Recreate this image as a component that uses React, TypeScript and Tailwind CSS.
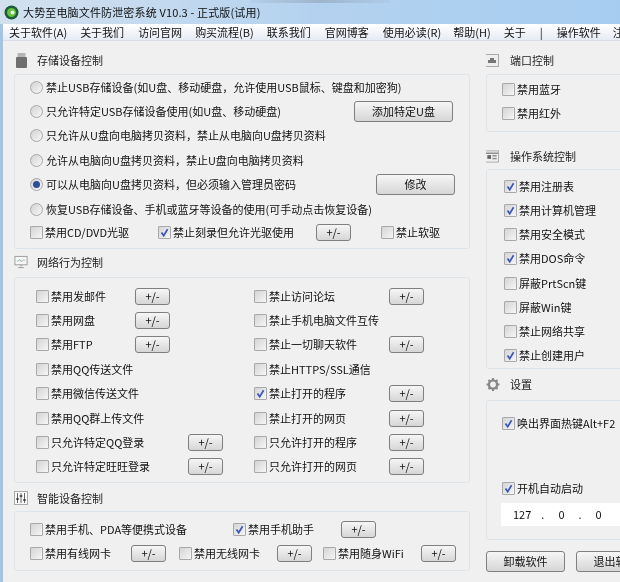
import React from "react";

const FONT = { fontFamily: '"Noto Sans CJK SC", "Liberation Sans", sans-serif' };

function Check({ on = false }: { on?: boolean }) {
  return (
    <span className="w-[13px] h-[13px] shrink-0 flex items-center justify-center border border-[#a9a9a9] bg-gradient-to-br from-[#d4d4d4] to-[#f6f6f6] rounded-[1px]">
      {on && (
        <svg width="11" height="11" viewBox="0 0 11 11">
          <path d="M2.5 5.5 L4.7 8.6 L8.6 2.2" fill="none" stroke="#3a56b8" strokeWidth="1.7" />
        </svg>
      )}
    </span>
  );
}

function Radio({ on = false }: { on?: boolean }) {
  return (
    <span className="w-[13px] h-[13px] shrink-0 flex items-center justify-center rounded-full border border-[#a8a8a8] bg-gradient-to-br from-[#d2d2d2] to-[#f8f8f8]">
      {on && <span className="w-[7px] h-[7px] rounded-full bg-[#2c4f9a]" />}
    </span>
  );
}

function Btn({ children = "+/-", className = "w-[35px] h-[17px]" }: { children?: React.ReactNode; className?: string }) {
  return (
    <span className={`${className} shrink-0 flex items-center justify-center rounded-[3px] border border-[#7f7f7f] bg-gradient-to-b from-[#f6f6f6] to-[#d6d6d6] text-[11px] text-[#111]`}>
      {children}
    </span>
  );
}

function CheckLabel({ on, text, className = "" }: { on?: boolean; text: string; className?: string }) {
  return (
    <span className={`flex items-center gap-[2px] shrink-0 ${className}`}>
      <Check on={on} />
      <span>{text}</span>
    </span>
  );
}

function Head({ icon, text, className = "", textClass = "" }: { icon: React.ReactNode; text: string; className?: string; textClass?: string }) {
  return (
    <div className={`flex items-center gap-[9px] text-[11px] text-[#222] ${className}`}>
      <span className="w-[14px] h-[14px] flex items-center justify-center shrink-0">{icon}</span>
      <span className={textClass}>{text}</span>
    </div>
  );
}

const UsbIcon = (
  <svg width="13" height="15" viewBox="0 0 13 15">
    <rect x="2.5" y="0" width="8" height="5" fill="#b5b5b5" />
    <rect x="1" y="4" width="11" height="11" rx="1" fill="#6f6f6f" />
  </svg>
);
const PortIcon = (
  <svg width="14" height="13" viewBox="0 0 14 13">
    <rect x="0.5" y="0.5" width="13" height="12" fill="#eee" stroke="#aaa" />
    <path d="M3 9V6h2V4h4v2h2v3z" fill="#777" />
  </svg>
);
const MonitorIcon = (
  <svg width="15" height="14" viewBox="0 0 15 14">
    <rect x="1" y="1" width="13" height="9" fill="#f7f7f7" stroke="#999" />
    <path d="M3 6h2l1-2 2 3 1-2h3" fill="none" stroke="#8aa" strokeWidth="0.8" />
    <path d="M7.5 10v2M4.5 13h6" stroke="#999" />
  </svg>
);
const SlidersIcon = (
  <svg width="14" height="14" viewBox="0 0 14 14">
    <rect x="0.5" y="0.5" width="13" height="13" fill="#fafafa" stroke="#aaa" />
    <path d="M3.5 2v10M7 2v10M10.5 2v10" stroke="#666" />
    <path d="M2.2 8h2.6M5.7 5h2.6M9.2 9h2.6" stroke="#333" strokeWidth="1.4" />
  </svg>
);
const WindowIcon = (
  <svg width="15" height="13" viewBox="0 0 15 13">
    <rect x="0.5" y="0.5" width="14" height="12" fill="#efefef" stroke="#aaa" />
    <path d="M1 3h13" stroke="#888" strokeWidth="1.5" />
    <rect x="2.5" y="5" width="4" height="4" fill="#666" />
    <rect x="8" y="5" width="4.5" height="1.5" fill="#888" />
    <rect x="8" y="8" width="4.5" height="1.5" fill="#888" />
  </svg>
);
const GearIcon = (
  <svg width="15" height="15" viewBox="0 0 24 24">
    <circle cx="12" cy="12" r="7" fill="none" stroke="#888" strokeWidth="4" />
    <path d="M12 1v5M12 18v5M1 12h5M18 12h5M4.2 4.2l3.5 3.5M16.3 16.3l3.5 3.5M4.2 19.8l3.5-3.5M16.3 7.7l3.5-3.5" stroke="#888" strokeWidth="3.4" />
  </svg>
);

const menu = [
  ["关于软件(A)", "ml-[9px]"],
  ["关于我们", "ml-[13px]"],
  ["访问官网", "ml-[14px]"],
  ["购买流程(B)", "ml-[13px]"],
  ["联系我们", "ml-[13px]"],
  ["官网博客", "ml-[14px]"],
  ["使用必读(R)", "ml-[14px]"],
  ["帮助(H)", "ml-[12px]"],
  ["关于", "ml-[13px]"],
  ["|", "ml-[14px]"],
  ["操作软件", "ml-[14px]"],
  ["注册软件", "ml-[12px]"],
];

const radios: { text: string; on?: boolean; btn?: string; btnClass?: string }[] = [
  { text: "禁止USB存储设备(如U盘、移动硬盘，允许使用USB鼠标、键盘和加密狗)" },
  { text: "只允许特定USB存储设备使用(如U盘、移动硬盘)", btn: "添加特定U盘", btnClass: "ml-[70px] w-[99px] h-[21px]" },
  { text: "只允许从U盘向电脑拷贝资料，禁止从电脑向U盘拷贝资料" },
  { text: "允许从电脑向U盘拷贝资料，禁止U盘向电脑拷贝资料" },
  { text: "可以从电脑向U盘拷贝资料，但必须输入管理员密码", on: true, btn: "修改", btnClass: "ml-[77px] w-[79px] h-[21px]" },
  { text: "恢复USB存储设备、手机或蓝牙等设备的使用(可手动点击恢复设备)" },
];

const net: [string, boolean, boolean, boolean][] = [
  ["禁用发邮件", false, true, false],
  ["禁止访问论坛", false, true, false],
  ["禁用网盘", false, true, false],
  ["禁止手机电脑文件互传", false, false, false],
  ["禁用FTP", false, true, false],
  ["禁止一切聊天软件", false, true, false],
  ["禁用QQ传送文件", false, false, false],
  ["禁止HTTPS/SSL通信", false, false, false],
  ["禁用微信传送文件", false, false, false],
  ["禁止打开的程序", true, true, false],
  ["禁用QQ群上传文件", false, false, false],
  ["禁止打开的网页", false, true, false],
  ["只允许特定QQ登录", false, true, true],
  ["只允许打开的程序", false, true, false],
  ["只允许特定旺旺登录", false, true, true],
  ["只允许打开的网页", false, true, false],
];

const sys: [string, boolean][] = [
  ["禁用注册表", true],
  ["禁用计算机管理", true],
  ["禁用安全模式", false],
  ["禁用DOS命令", true],
  ["屏蔽PrtScn键", false],
  ["屏蔽Win键", false],
  ["禁止网络共享", false],
  ["禁止创建用户", true],
];

export default function App() {
  return (
    <div style={FONT} className="w-[620px] h-[582px] overflow-hidden flex flex-col bg-[#f0f0f0] text-[11px] leading-none text-[#111] blur-[0.4px]">
      <div className="relative h-[24px] shrink-0 flex items-center pl-[4px] gap-[4px] bg-gradient-to-r from-[#d3e1ee] via-[#b4d2ef] to-[#a6cdf0] text-[11px] tracking-[0.15px] text-[#111]">
        <span className="absolute top-0 left-[250px] w-[140px] h-[3px] bg-gradient-to-r from-[#a9c6e2] via-[#7d8a97] to-[#a9c6e2] opacity-40" />
        <svg width="15" height="15" viewBox="0 0 15 15">
          <circle cx="7.5" cy="7.5" r="7" fill="#1d5c3a" />
          <circle cx="7.5" cy="7.5" r="4.5" fill="#62c13d" />
          <circle cx="8.5" cy="7.5" r="2" fill="#e8f5e0" />
        </svg>
        <span>大势至电脑文件防泄密系统 V10.3 - 正式版(试用)</span>
      </div>
      <div className="flex-1 flex min-h-0 border-l-[3px] border-[#a4c4e2]">
        <div className="flex-1 flex flex-col min-w-0">
          <div className="h-[17px] shrink-0 flex items-center whitespace-nowrap overflow-hidden bg-gradient-to-b from-[#ffffff] to-[#e6ebf4] border-b border-[#d8dde6]">
            {menu.map(([t, c], i) => (
              <span key={i} className={`${c} ${i === 0 ? "-translate-x-[3px] mr-[-3px]" : ""} shrink-0`}>{t}</span>
            ))}
          </div>
          <div className="flex flex-1 min-h-0 pt-[12px] pl-[11px]">
            <div className="w-[456px] shrink-0 flex flex-col">
              <Head icon={UsbIcon} text="存储设备控制" className="h-[14px]" />
              <div className="mt-[7px] h-[175px] border border-[#dde4ea] rounded-[3px] pl-[15px] flex flex-col">
                {radios.map((r) => (
                  <div key={r.text} className="h-[24.4px] flex items-center gap-[3px] whitespace-nowrap">
                    <Radio on={r.on} />
                    <span>{r.text}</span>
                    {r.btn && <Btn className={r.btnClass}>{r.btn}</Btn>}
                  </div>
                ))}
                <div className="h-[22px] flex items-center whitespace-nowrap">
                  <CheckLabel text="禁用CD/DVD光驱" className="w-[128px]" />
                  <CheckLabel on text="禁止刻录但允许光驱使用" className="w-[158px]" />
                  <Btn />
                  <CheckLabel text="禁止软驱" className="ml-[30px]" />
                </div>
              </div>
              <Head icon={MonitorIcon} text="网络行为控制" className="mt-[6px] h-[14px]" />
              <div className="mt-[8px] h-[206px] border border-[#dde4ea] rounded-[3px] pt-[6px] pl-[21px] grid grid-cols-[218px_1fr] auto-rows-[24.4px]">
                {net.map(([t, on, b, wide], i) => (
                  <div key={t} className="flex items-center whitespace-nowrap">
                    <CheckLabel on={on} text={t} className={wide ? "w-[152px]" : i % 2 ? "w-[135px]" : "w-[99px]"} />
                    {b && <Btn />}
                  </div>
                ))}
              </div>
              <Head icon={SlidersIcon} text="智能设备控制" className="mt-[8px] h-[14px]" />
              <div className="mt-[6px] h-[60px] border border-[#dde4ea] rounded-[3px] pt-[9px] pl-[15px] flex flex-col gap-[7px]">
                <div className="h-[17px] flex items-center whitespace-nowrap">
                  <CheckLabel text="禁用手机、PDA等便携式设备" className="w-[203px]" />
                  <CheckLabel on text="禁用手机助手" className="w-[108px]" />
                  <Btn />
                </div>
                <div className="h-[17px] flex items-center whitespace-nowrap">
                  <CheckLabel text="禁用有线网卡" className="w-[101px]" />
                  <Btn />
                  <CheckLabel text="禁用无线网卡" className="ml-[13px] w-[98px]" />
                  <Btn />
                  <CheckLabel text="禁用随身WiFi" className="ml-[11px] w-[98px]" />
                  <Btn />
                </div>
              </div>
            </div>
            <div className="flex-1 min-w-0 ml-[16px] flex flex-col overflow-hidden">
              <Head icon={PortIcon} text="端口控制" className="h-[14px] -ml-[1px]" textClass="ml-[2px]" />
              <div className="mt-[7px] h-[58px] w-[150px] border border-[#dde4ea] rounded-[3px] pl-[15px] pt-[2px] flex flex-col">
                <div className="h-[24.5px] flex items-center"><CheckLabel text="禁用蓝牙" /></div>
                <div className="h-[24.5px] flex items-center"><CheckLabel text="禁用红外" /></div>
              </div>
              <Head icon={WindowIcon} text="操作系统控制" className="mt-[17px] h-[14px] -ml-[1px]" textClass="ml-[2px]" />
              <div className="mt-[6px] h-[200px] w-[150px] border border-[#dde4ea] rounded-[3px] pl-[17px] pt-[4px] flex flex-col">
                {sys.map(([t, on]) => (
                  <div key={t} className="h-[24.4px] flex items-center whitespace-nowrap"><CheckLabel on={on} text={t} /></div>
                ))}
              </div>
              <Head icon={GearIcon} text="设置" className="mt-[8px] h-[14px]" textClass="ml-[1px]" />
              <div className="mt-[9px] h-[140px] w-[150px] border border-[#dde4ea] rounded-[3px] pl-[15px] pt-[15px] flex flex-col">
                <div className="h-[14px] flex items-center whitespace-nowrap"><CheckLabel on text="唤出界面热键Alt+F2" /></div>
                <div className="h-[14px] mt-[51px] flex items-center whitespace-nowrap"><CheckLabel on text="开机自动启动" /></div>
                <div className="mt-[8px] h-[23px] w-[130px] -ml-[1px] bg-white flex items-center pl-[12px] gap-[10px] text-[11px] whitespace-nowrap">
                  <span>127</span><span>.</span><span className="ml-[4px]">0</span><span className="ml-[4px]">.</span><span className="ml-[4px]">0</span>
                </div>
              </div>
              <div className="mt-[11px] flex gap-[11px]">
                <Btn className="w-[79px] h-[21px]">卸载软件</Btn>
                <Btn className="w-[79px] h-[21px]">退出软件</Btn>
              </div>
            </div>
          </div>
        </div>
      </div>
    </div>
  );
}
